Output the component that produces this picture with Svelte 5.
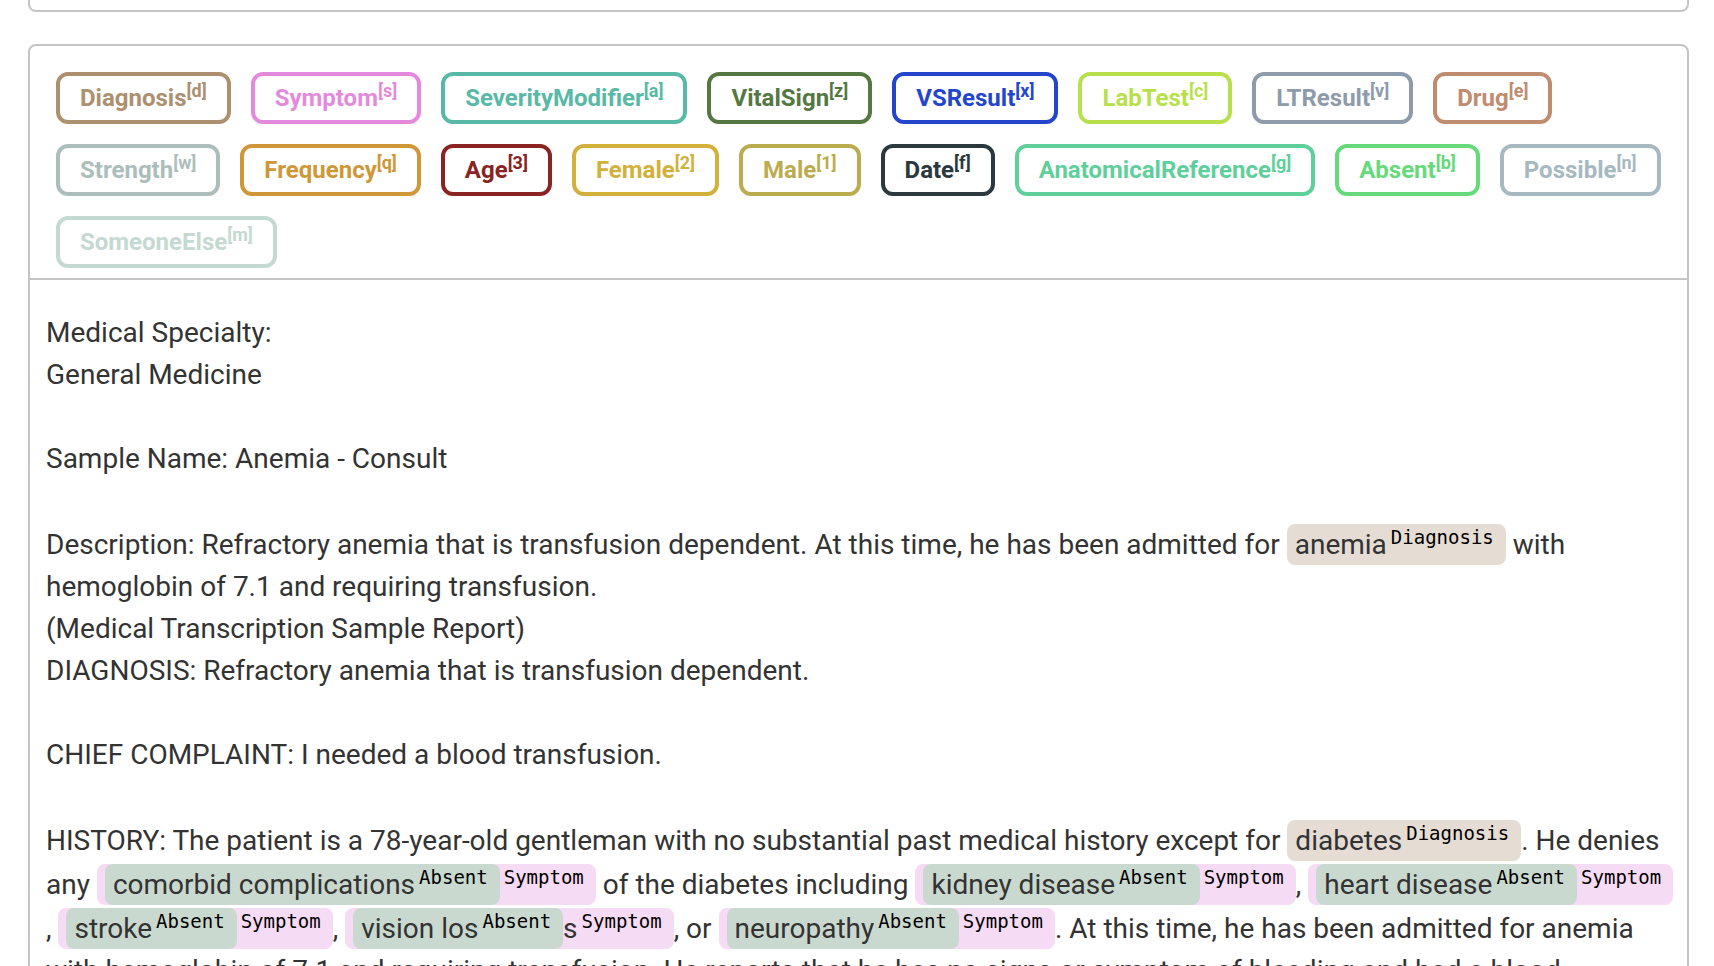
<script>
  const labels = [
    { name: 'Diagnosis', key: 'd', color: '#ac9070' },
    { name: 'Symptom', key: 's', color: '#e48adc' },
    { name: 'SeverityModifier', key: 'a', color: '#58b9a6' },
    { name: 'VitalSign', key: 'z', color: '#557842' },
    { name: 'VSResult', key: 'x', color: '#2346cc' },
    { name: 'LabTest', key: 'c', color: '#b8df4c' },
    { name: 'LTResult', key: 'v', color: '#8d9bab' },
    { name: 'Drug', key: 'e', color: '#c08c6f' },
    { name: 'Strength', key: 'w', color: '#abbebb' },
    { name: 'Frequency', key: 'q', color: '#cf9737' },
    { name: 'Age', key: '3', color: '#8a2422' },
    { name: 'Female', key: '2', color: '#d2b03c' },
    { name: 'Male', key: '1', color: '#bbad4f' },
    { name: 'Date', key: 'f', color: '#29393d' },
    { name: 'AnatomicalReference', key: 'g', color: '#5fcf9b' },
    { name: 'Absent', key: 'b', color: '#66da7b' },
    { name: 'Possible', key: 'n', color: '#a6b9c1' },
    { name: 'SomeoneElse', key: 'm', color: '#c4d9d1' }
  ];
</script>

{#snippet absentSymptom(text, rest = '')}<mark class="symptom"><mark class="absent">{text}<sup>Absent</sup></mark>{rest}<sup>Symptom</sup></mark>{/snippet}

<main>
  <section class="panel previous"></section>
  <section class="panel">
    <div class="labels">
      {#each labels as label}
        <button type="button" style="--tag: {label.color}">{label.name}<sup>[{label.key}]</sup></button>
      {/each}
    </div>
    <article>
      <p>Medical Specialty:<br />General Medicine</p>
      <p>Sample Name: Anemia - Consult</p>
      <p>
        Description: Refractory anemia that is transfusion dependent. At this time, he has been admitted for
        <mark class="diagnosis">anemia<sup>Diagnosis</sup></mark> with hemoglobin of 7.1 and requiring transfusion.<br />
        (Medical Transcription Sample Report)<br />
        DIAGNOSIS: Refractory anemia that is transfusion dependent.
      </p>
      <p>CHIEF COMPLAINT: I needed a blood transfusion.</p>
      <p>
        HISTORY: The patient is a 78-year-old gentleman with no substantial past medical history except for
        <mark class="diagnosis">diabetes<sup>Diagnosis</sup></mark>. He denies any
        {@render absentSymptom('comorbid complications')} of the diabetes including
        {@render absentSymptom('kidney disease')},
        {@render absentSymptom('heart disease')}<wbr />,
        {@render absentSymptom('stroke')},
        {@render absentSymptom('vision los', 's')}, or
        {@render absentSymptom('neuropathy')}. At this time, he has been admitted for anemia with hemoglobin of 7.1
        and requiring transfusion. He reports that he has no signs or symptom of bleeding and had a blood
      </p>
    </article>
  </section>
</main>

<style>
  :global(body) {
    margin: 0;
    background: #fff;
  }

  main {
    box-sizing: border-box;
    height: 100vh;
    overflow: hidden;
    padding: 0 25px 0 28px;
    font-family: Roboto, sans-serif;
    color: #333;
  }

  .panel {
    border: 2px solid #c4c4c4;
    border-radius: 8px;
  }

  .previous {
    height: 10px;
    margin-bottom: 32px;
    border-top: 0;
    border-radius: 0 0 8px 8px;
  }

  .labels {
    display: flex;
    flex-wrap: wrap;
    gap: 20px;
    padding: 26px 16px 10px 26px;
    border-bottom: 2px solid #c4c4c4;
  }

  button {
    box-sizing: border-box;
    height: 52px;
    padding: 0 20px;
    border: 4px solid var(--tag);
    border-radius: 12px;
    background: #fff;
    color: var(--tag);
    font: bold 24px/44px Roboto, sans-serif;
    white-space: nowrap;
  }

  button sup {
    font-size: 18px;
    line-height: 0;
    vertical-align: 9px;
  }

  article {
    padding: 32px 12px 32px 16px;
    font-size: 28px;
    line-height: 42px;
  }

  p {
    margin: 0 0 42px;
  }

  mark {
    padding: 4px 8px;
    border-radius: 8px;
    color: inherit;
  }

  .diagnosis {
    background: #e5ddd3;
  }

  .symptom {
    background: #f6dbf4;
  }

  .absent {
    background: #cad9cf;
  }

  mark sup {
    margin: 0 4px;
    color: #000;
    font-family: "DejaVu Sans Mono", monospace;
    font-size: 19px;
    line-height: 30px;
    vertical-align: 10px;
  }
</style>
